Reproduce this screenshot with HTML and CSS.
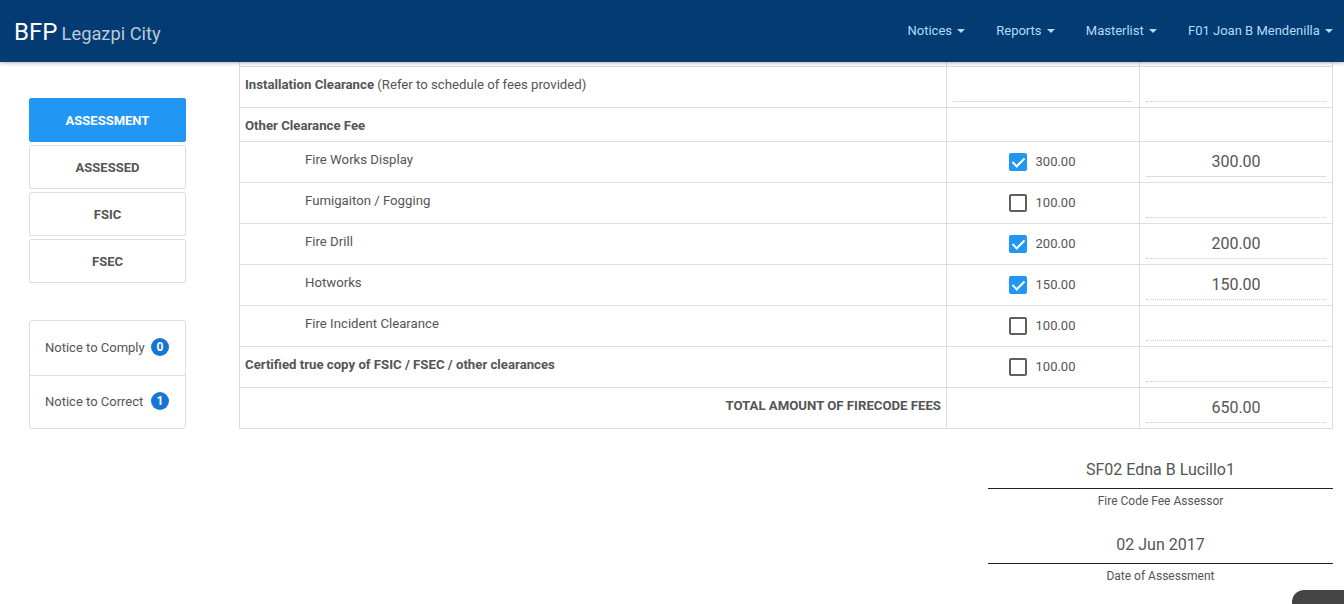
FILE: index.html
```html
<!DOCTYPE html>
<html>
<head>
<meta charset="utf-8">
<title>BFP Legazpi City</title>
<link rel="stylesheet" href="styles.css">
</head>
<body>
<header class="navbar">
  <div class="brand"><span class="brand-main">BFP</span> <span class="brand-sub">Legazpi City</span></div>
  <nav class="nav">
    <a class="nav-link">Notices <span class="caret"></span></a>
    <a class="nav-link">Reports <span class="caret"></span></a>
    <a class="nav-link">Masterlist <span class="caret"></span></a>
    <a class="nav-link">F01 Joan B Mendenilla <span class="caret"></span></a>
  </nav>
</header>

<div class="page">
  <aside class="sidebar">
    <div class="tabs">
      <a class="tab active">ASSESSMENT</a>
      <a class="tab">ASSESSED</a>
      <a class="tab">FSIC</a>
      <a class="tab">FSEC</a>
    </div>
    <ul class="notices">
      <li class="notice"><span>Notice to Comply</span><span class="badge">0</span></li>
      <li class="notice"><span>Notice to Correct</span><span class="badge">1</span></li>
    </ul>
  </aside>

  <main class="content">
    <table class="fees">
      <colgroup><col class="c1"><col class="c2"><col class="c3"></colgroup>
      <tr class="sliver"><td></td><td></td><td></td></tr>
      <tr>
        <td class="label"><b>Installation Clearance</b> (Refer to schedule of fees provided)</td>
        <td class="inp"><div class="field solid"></div></td>
        <td class="inp"><div class="field dotted"></div></td>
      </tr>
      <tr>
        <td class="label"><b>Other Clearance Fee</b></td>
        <td></td>
        <td></td>
      </tr>
      <tr>
        <td class="label sub">Fire Works Display</td>
        <td class="chk"><span class="check on"></span><span class="amt">300.00</span></td>
        <td class="inp"><div class="field solid">300.00</div></td>
      </tr>
      <tr>
        <td class="label sub">Fumigaiton / Fogging</td>
        <td class="chk"><span class="check"></span><span class="amt">100.00</span></td>
        <td class="inp"><div class="field dotted"></div></td>
      </tr>
      <tr>
        <td class="label sub">Fire Drill</td>
        <td class="chk"><span class="check on"></span><span class="amt">200.00</span></td>
        <td class="inp"><div class="field dotted">200.00</div></td>
      </tr>
      <tr>
        <td class="label sub">Hotworks</td>
        <td class="chk"><span class="check on"></span><span class="amt">150.00</span></td>
        <td class="inp"><div class="field dotted">150.00</div></td>
      </tr>
      <tr>
        <td class="label sub">Fire Incident Clearance</td>
        <td class="chk"><span class="check"></span><span class="amt">100.00</span></td>
        <td class="inp"><div class="field dotted"></div></td>
      </tr>
      <tr>
        <td class="label"><b>Certified true copy of FSIC / FSEC / other clearances</b></td>
        <td class="chk"><span class="check"></span><span class="amt">100.00</span></td>
        <td class="inp"><div class="field dotted"></div></td>
      </tr>
      <tr>
        <td class="label total"><b>TOTAL AMOUNT OF FIRECODE FEES</b></td>
        <td></td>
        <td class="inp"><div class="field dotted">650.00</div></td>
      </tr>
    </table>

    <div class="signatures">
      <div class="sig">
        <div class="sig-value">SF02 Edna B Lucillo1</div>
        <div class="sig-label">Fire Code Fee Assessor</div>
      </div>
      <div class="sig">
        <div class="sig-value">02 Jun 2017</div>
        <div class="sig-label">Date of Assessment</div>
      </div>
    </div>
  </main>
</div>

<div class="float-btn"></div>
</body>
</html>
```

FILE: styles.css
```css
* { box-sizing: border-box; }

html, body {
  margin: 0;
  padding: 0;
  background: #fff;
  font-family: Roboto, "Liberation Sans", Arial, sans-serif;
  color: #555;
  font-size: 13px;
  overflow: hidden;
}

.navbar {
  height: 62px;
  background: #033b72;
  display: flex;
  align-items: center;
  justify-content: space-between;
  padding: 0 11px 0 14px;
  box-shadow: 0 1px 4px rgba(0,0,0,0.3);
  position: relative;
  z-index: 2;
}

.brand { white-space: nowrap; margin-top: 2px; }
.brand-main { color: #fff; font-size: 24px; }
.brand-sub { color: #bcc8d6; font-size: 18.3px; margin-left: 1px; }

.nav { display: flex; gap: 31px; margin-top: -2px; }
.nav-link {
  color: #b2dbfb;
  font-size: 13px;
  text-decoration: none;
  white-space: nowrap;
}
.caret {
  display: inline-block;
  width: 0;
  height: 0;
  margin-left: 2px;
  vertical-align: middle;
  border-top: 4px solid #b2dbfb;
  border-left: 4px solid transparent;
  border-right: 4px solid transparent;
}

.page {
  display: flex;
  padding: 0 11px 0 29px;
  gap: 53px;
}

.sidebar {
  width: 157px;
  flex: none;
  padding-top: 36px;
}

.tabs { display: flex; flex-direction: column; gap: 3px; }
.tab {
  height: 44px;
  display: flex;
  align-items: center;
  justify-content: center;
  padding-top: 1px;
  border: 1px solid #ddd;
  border-radius: 2px;
  font-weight: bold;
  font-size: 13px;
  color: #555;
}
.tab.active {
  background: #2196f3;
  border-color: #2196f3;
  color: #fff;
}

.notices {
  list-style: none;
  margin: 37px 0 0;
  padding: 0;
  border: 1px solid #ddd;
  border-radius: 3px;
}
.notice {
  height: 54px;
  display: flex;
  align-items: center;
  justify-content: space-between;
  padding: 0 16px 2px 15px;
  font-size: 13px;
}
.notice + .notice { border-top: 1px solid #ddd; height: 53px; }
.badge {
  width: 18px;
  height: 18px;
  border-radius: 50%;
  background: #1776d3;
  color: #fff;
  font-weight: bold;
  font-size: 12px;
  display: flex;
  align-items: center;
  justify-content: center;
}

.content { flex: 1; min-width: 0; }

.fees {
  width: 100%;
  border-collapse: collapse;
  table-layout: fixed;
}
.fees col.c1 { width: 707px; }
.fees col.c2 { width: 193px; }
.fees td {
  border: 1px solid #ddd;
  padding: 0;
  vertical-align: top;
}
.fees tr.sliver td { height: 4px; border-top: 0; }

.fees td.label {
  padding: 9px 5px 7px;
  line-height: 17px;
  font-size: 13.2px;
}
.fees td.label b { font-weight: bold; }
.fees td.sub { padding-left: 65px; }
.fees td.total { text-align: right; font-size: 13.2px; }

.fees td.inp { padding: 3px 6px 5px; }
.field {
  height: 32px;
  line-height: 32px;
  text-align: center;
  font-size: 16px;
  color: #555;
  padding-top: 1px;
}
.field.solid { border-bottom: 1px solid #ddd; }
.field.dotted { border-bottom: 1px dotted #ccc; }

.fees td.chk {
  vertical-align: middle;
  text-align: center;
  padding: 0 2px 0 0;
}
.check {
  display: inline-block;
  width: 18px;
  height: 18px;
  border: 2px solid #5f5f5f;
  border-radius: 2px;
  vertical-align: middle;
  position: relative;
}
.check.on {
  background: #2196f3;
  border-color: #2196f3;
}
.check.on::after {
  content: "";
  position: absolute;
  left: 4px;
  top: 0px;
  width: 5px;
  height: 10px;
  border-right: 2px solid #fff;
  border-bottom: 2px solid #fff;
  transform: rotate(45deg);
}
.amt {
  display: inline-block;
  vertical-align: middle;
  margin-left: 9px;
  font-size: 13px;
  color: #555;
}

.signatures {
  width: 345px;
  margin: 4px 0 0 auto;
  text-align: center;
}
.sig { padding-top: 25px; }
.sig + .sig { padding-top: 23px; }
.sig-value {
  font-size: 16px;
  line-height: 24px;
  padding-bottom: 6px;
  border-bottom: 1px solid #222;
}
.sig-label {
  font-size: 12px;
  line-height: 17px;
  margin-top: 4px;
}

.float-btn {
  position: fixed;
  left: 1292px;
  top: 590px;
  width: 70px;
  height: 40px;
  background: #444;
  border-radius: 12px 12px 0 0;
}
```
